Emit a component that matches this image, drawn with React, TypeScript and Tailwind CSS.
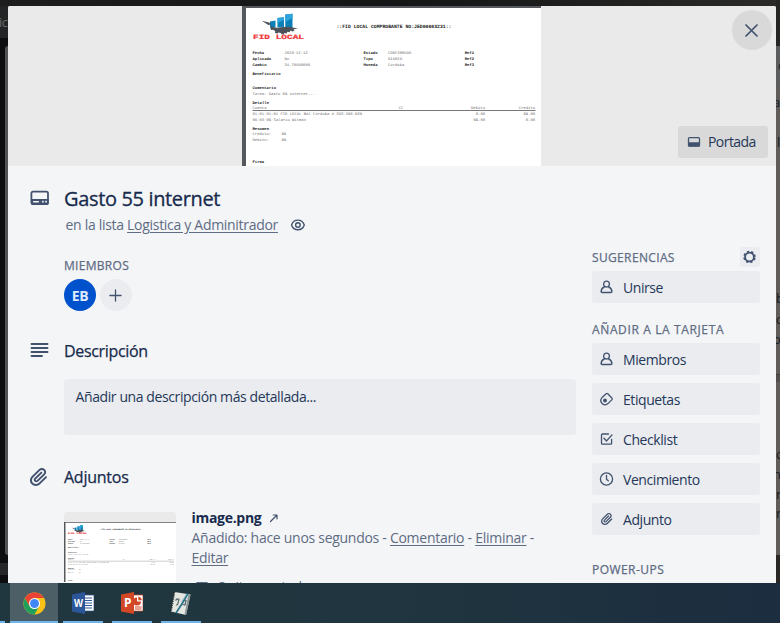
import React from 'react';

type IconProps = { className?: string };

const stroke = {
  fill: 'none',
  stroke: 'currentColor',
  strokeLinecap: 'round' as const,
  strokeLinejoin: 'round' as const,
};

function CoverIcon({ className }: IconProps) {
  return (
    <svg viewBox="0 0 14 12" className={className}>
      <rect x="1.5" y="1.7" width="11" height="8.5" rx="1" {...stroke} strokeWidth="1.3" />
      <rect x="1.5" y="6.3" width="11" height="4.3" rx="0.6" fill="currentColor" />
    </svg>
  );
}

function CardIcon() {
  return (
    <svg viewBox="0 0 20 16" width="20" height="16" className="text-[#42526e]">
      <rect x="1.4" y="1.6" width="16.6" height="12.4" rx="1.6" {...stroke} strokeWidth="1.8" />
      <rect x="1" y="9" width="17.5" height="5.8" rx="1.2" fill="currentColor" />
      <rect x="3" y="11" width="6" height="1.4" rx="0.6" fill="#f4f5f7" />
      <rect x="12" y="10.8" width="1.8" height="1.7" rx="0.6" fill="#f4f5f7" />
      <rect x="15.1" y="10.8" width="1.8" height="1.7" rx="0.6" fill="#f4f5f7" />
    </svg>
  );
}

function PersonIcon() {
  return (
    <svg viewBox="0 0 16 16" width="16" height="16">
      <circle cx="7.5" cy="5.1" r="2.9" {...stroke} strokeWidth="1.3" />
      <path d="M5.3 8C3.3 8.7 2.2 10.3 2.1 12.6c0 .6.3.9.9.9h9c.6 0 .9-.3.9-.9C12.8 10.3 11.7 8.7 9.7 8" {...stroke} strokeWidth="1.4" />
    </svg>
  );
}

function TagIcon() {
  return (
    <svg viewBox="0 0 16 16" width="16" height="16">
      <path d="M3 6.6 7.2 2.7q.8-.6 1.6 0L13 7.3q.5.7 0 1.3L9 12.6A4.25 4.25 0 0 1 3 6.6z" {...stroke} strokeWidth="1.3" />
      <circle cx="6" cy="9.5" r="1.9" fill="currentColor" />
    </svg>
  );
}

function CheckIcon() {
  return (
    <svg viewBox="0 0 16 16" width="16" height="16">
      <path d="M9.5 3H3.5c-.6 0-1 .3-1 .9V12.300c0 .6.4.9 1 .9h8.200c.6 0 .9-.3.9-.9V8.500" {...stroke} strokeWidth="1.3" />
      <path d="m5 7.300 2.600 2.600 5.400-6" {...stroke} strokeWidth="1.4" />
    </svg>
  );
}

function ClockIcon() {
  return (
    <svg viewBox="0 0 16 16" width="16" height="16">
      <circle cx="7.5" cy="8" r="6.1" {...stroke} strokeWidth="1.3" />
      <path d="M7.5 4.300V8.300l1.800 1.500" {...stroke} strokeWidth="1.3" />
    </svg>
  );
}

function ClipIcon({ className }: IconProps) {
  return (
    <svg viewBox="0 0 24 24" className={className}>
      <path
        fill="currentColor"
        fillRule="evenodd"
        d="M11.6426 17.9647C10.1123 19.46 7.62736 19.4606 6.10092 17.9691C4.57505 16.478 4.57769 14.0467 6.10253 12.5566L13.2505 5.57184C14.1476 4.6952 15.5861 4.69251 16.4832 5.56921C17.3763 6.44184 17.3778 7.85135 16.4869 8.72199L9.78361 15.2722C9.53288 15.5172 9.12807 15.5163 8.86954 15.2636C8.61073 15.0107 8.60963 14.6158 8.86954 14.3618L15.0989 8.27463C15.4812 7.90109 15.4812 7.29546 15.0989 6.92192C14.7167 6.54838 14.0969 6.54838 13.7146 6.92192L7.48523 13.0091C6.45911 14.0118 6.46356 15.618 7.48523 16.6163C8.50674 17.6145 10.1511 17.6186 11.1679 16.6249L17.8712 10.0747C19.5274 8.45632 19.5244 5.83555 17.8676 4.2165C16.2047 2.59156 13.5266 2.59657 11.8662 4.21913L4.71822 11.2039C2.42951 13.4404 2.42555 17.083 4.71661 19.3218C7.00774 21.5606 10.7323 21.5597 13.0269 19.3174L19.7133 12.7837C20.0956 12.4101 20.0956 11.8045 19.7133 11.431C19.331 11.0574 18.7113 11.0574 18.329 11.431L11.6426 17.9647Z"
      />
    </svg>
  );
}

function GearIcon() {
  return (
    <svg viewBox="0 0 14 14" width="14" height="14">
      <circle cx="6.5" cy="7" r="4.4" {...stroke} strokeWidth="1.8" />
      <circle cx="6.5" cy="7" r="5.5" fill="none" stroke="currentColor" strokeWidth="1.5" strokeDasharray="2.3 2.02" strokeDashoffset="-1" />
    </svg>
  );
}

function EyeIcon() {
  return (
    <svg viewBox="0 0 16 14" width="16" height="14">
      <path d="M1.5 7C2.7 3.8 5 2.100 7.900 2.100S13.100 3.800 14.300 7c-1.200 3.200-3.500 4.800-6.400 4.800S2.700 10.200 1.500 7z" {...stroke} strokeWidth="1.4" />
      <circle cx="7.9" cy="7" r="2.3" {...stroke} strokeWidth="1.4" />
    </svg>
  );
}

type Line = [number, number, string, number, string];

const lines: Line[] = [
  [10.5, 47.5, 'Fecha', 11.7, 'b'],
  [42.5, 47.5, '2020-12-13', 23, 'n'],
  [10.5, 53.5, 'Aplicado', 18.7, 'b'],
  [42.5, 53.5, 'No', 4.6, 'n'],
  [10.5, 59.5, 'Cambio', 14, 'b'],
  [42.5, 59.5, '34.79040000', 25.6, 'n'],
  [10.5, 69, 'Beneficiario', 28, 'b'],
  [10.5, 83, 'Comentario', 23.5, 'b'],
  [10.5, 88.5, 'Tarea: Gasto 55 internet...', 62.5, 'n'],
  [10.5, 97.5, 'Detalle', 16.5, 'b'],
  [10.5, 102.7, 'Cuenta', 14, 'n'],
  [10.5, 109.2, '01-01-01-01 FID LOCAL BAC Córdoba # 363-390-535', 109.5, 'n'],
  [10.5, 115.2, '06-03-05 Salario Witman', 53.5, 'n'],
  [10.5, 124.3, 'Resumen', 16.5, 'b'],
  [10.5, 129.3, 'Credito:', 18.7, 'n'],
  [39.5, 129.3, '55', 4.7, 'n'],
  [10.5, 135.3, 'Debito:', 16.5, 'n'],
  [39.5, 135.3, '55', 4.7, 'n'],
  [10.5, 156.6, 'Firma', 11.7, 'b'],
  [121.5, 47.5, 'Estado', 14, 'b'],
  [146, 47.5, 'CONFIRMADO', 23, 'n'],
  [121.5, 53.5, 'Tipo', 9.4, 'b'],
  [146, 53.5, 'DIARIO', 14, 'n'],
  [121.5, 59.5, 'Moneda', 14, 'b'],
  [146, 59.5, 'Cordoba', 16.4, 'n'],
  [222.7, 47.5, 'Ref1', 9.4, 'b'],
  [222.7, 53.5, 'Ref2', 9.4, 'b'],
  [222.7, 59.5, 'Ref3', 9.4, 'b'],
  [156.7, 102.7, 'CC', 4.7, 'n'],
  [229, 102.7, 'Debito', 14, 'n'],
  [276.7, 102.7, 'Credito', 16.4, 'n'],
  [233.7, 109.2, '0.00', 9.4, 'n'],
  [281.5, 109.2, '55.00', 11.7, 'n'],
  [231.4, 115.2, '55.00', 11.7, 'n'],
  [283.8, 115.2, '0.00', 9.4, 'n'],
];

function Receipt({ className }: IconProps) {
  return (
    <svg viewBox="0 0 299 160" className={className} fontFamily="'Liberation Mono', monospace" textRendering="geometricPrecision">
      <rect width="299" height="160" fill="#fff" />
      <path d="M0 0H299V2H4V160H0z" fill="#55585c" />
      <g fill="#0a7fb8">
        <path d="M28 15.5 33.5 14.500v7H28z" />
        <path d="M35.5 12 42 11.200V21.500h-6.500z" />
        <path d="M43.3 8.500 50.500 7.800V22h-7.200z" />
      </g>
      <path d="M35.5 12 42 11.200V14l-6.500 3zM43.300 8.500 50.500 7.800V12l-7.200 4z" fill="#2ba5dc" />
      <g fill="#4d5258">
        <path d="M19.7 14.700 29 17l-2 1.200c2 2.500 6 4 10 3.500 6-.7 10-1.500 13.500-.2l5.500 1-4.500.8 1 1.500-2 .8-1.800-1-1.200 1.700-2-.5-1 1.700-2.200-.5-.4 1.500-2.400-.2-.6-1.400-2.600-.4-1 1.200-2.300-1 .2-1.500-2-1.500-2 .2-1-2 1.200-1.300-1-2.300-2 .6z" />
      </g>
      <text x="11" y="33" fontSize="6.4" fontWeight="700" fill="#f03438" stroke="#f03438" strokeWidth="0.2" textLength="51" lengthAdjust="spacingAndGlyphs">FID LOCAL</text>
      <text x="94.5" y="22" fontSize="4.9" fontWeight="700" fill="#202020" textLength="115" lengthAdjust="spacingAndGlyphs">::FID LOCAL COMPROBANTE NO:JED00003231::</text>
      {lines.map(([x, y, value, width, kind], i) => (
        <text
          key={i}
          x={x}
          y={y}
          fontSize="3.9"
          fontWeight={kind === 'b' ? 700 : 400}
          fill={kind === 'b' ? '#181818' : '#6d6d6d'}
          textLength={width}
          lengthAdjust="spacingAndGlyphs"
        >
          {value}
        </text>
      ))}
      <path d="M10.5 104.5H293.5" stroke="#777" strokeWidth="1" />
    </svg>
  );
}

function SideButton({ icon, label }: { icon: React.ReactNode; label: string }) {
  return (
    <button className="flex h-8 w-full items-center rounded-[3px] bg-[#eaecf0] pl-2 text-[14px] text-[#253858]">
      <span className="-ml-px w-4 text-[#42526e]">{icon}</span>
      <span className="ml-2 tracking-[-0.42px]">{label}</span>
    </button>
  );
}

function ChromeIcon() {
  return (
    <svg viewBox="0 0 48 48" width="23" height="23">
      <circle cx="24" cy="24" r="23" fill="#fbc116" />
      <path d="M4.1 12.5 14 29.7l10 5.8L24 47A23 23 0 0 1 4.1 12.5z" fill="#1fa15d" />
      <path d="M24 47 34 29.7 24 34 14 29.7z" fill="#1fa15d" />
      <path d="M4.1 12.5A23 23 0 0 1 43.9 12.5H24L14 29.7z" fill="#ea4335" />
      <circle cx="24" cy="24" r="11.5" fill="#fff" />
      <circle cx="24" cy="24" r="9.3" fill="#4285f4" />
    </svg>
  );
}

function WordIcon() {
  return (
    <svg viewBox="0 0 22 22" width="22" height="22" fontFamily="'Open Sans', sans-serif">
      <rect x="11" y="3" width="11" height="16" fill="#fff" stroke="#2b579a" strokeWidth="0.7" />
      <path d="M13 6h7M13 8.500h7M13 11h7M13 13.500h7M13 16h7" stroke="#2b579a" strokeWidth="1.2" />
      <path d="M0 2.500 13 0v22L0 19.500z" fill="#2b579a" />
      <text x="2" y="15" fontSize="10.5" fontWeight="700" fill="#fff" textLength="9" lengthAdjust="spacingAndGlyphs">W</text>
    </svg>
  );
}

function PowerPointIcon() {
  return (
    <svg viewBox="0 0 22 22" width="22" height="22" fontFamily="'Open Sans', sans-serif">
      <rect x="11" y="3" width="11" height="16" fill="#fff" stroke="#d24726" strokeWidth="0.7" />
      <path d="M16 5.500v4h4a4 4 0 1 1-4-4z" fill="#d24726" />
      <path d="M17.3 4.500a4 4 0 0 1 3.500 3.700h-3.500z" fill="#d24726" />
      <path d="M14 15h6.500M14 17h6.500" stroke="#d24726" strokeWidth="1" />
      <path d="M0 2.500 13 0v22L0 19.500z" fill="#d24726" />
      <text x="3" y="15.3" fontSize="12" fontWeight="700" fill="#fff">P</text>
    </svg>
  );
}

function NotebookIcon() {
  return (
    <svg viewBox="0 0 22 25" width="22" height="25">
      <path d="M4.5 1 20.500 3.500 16 24 1 20.500z" fill="#e4e6e2" />
      <path d="m20.5 3.500-4.500 20.500-1.500-.5L18.500 3.200z" fill="#8a9596" />
      <path d="M4.5 1 1 20.500" stroke="#222a2c" strokeWidth="1.6" strokeDasharray="1.2 1" />
      <path d="M5.5 9.500 7 8l2 .3-1.500 5.500L6 14M13.500 9l2.500.5-1 4.500-2.500-.5" stroke="#566265" strokeWidth="1.2" fill="none" />
      <path d="M18 2.500 12.500 12 6 22" stroke="#2a7189" strokeWidth="1.7" fill="none" />
      <path d="M16.5 3 11.500 11" stroke="#91bec9" strokeWidth="1" />
    </svg>
  );
}

function Task({ children, active }: { children: React.ReactNode; active?: boolean }) {
  return (
    <div className={`flex h-full items-center justify-center border-b-2 border-[#70b5ea] pt-[2px] ${active ? 'w-12 bg-[#4c5f67]' : 'w-10'}`}>
      {children}
    </div>
  );
}

function BoardBehind() {
  return (
    <div className="absolute inset-0 overflow-hidden bg-[#0c0e10]">
      <div className="absolute inset-x-0 top-0 h-[6px] bg-linear-to-r from-[#1d1d1e] via-[#141516] to-[#2b2a28]" />
      <div className="absolute top-[6px] left-0 h-8 w-2 overflow-hidden bg-[#242526] text-[13px] text-[#66696c]">
        <span className="absolute top-[7px] -left-[1px] tracking-[-0.5px]">ic</span>
      </div>
      <div className="absolute top-[46px] left-[5px] h-[509px] w-[10px] rounded-[3px] bg-[#545454]" />
      <div className="absolute top-[563px] left-0 h-3 w-2 bg-[#262728]" />
      <div className="absolute top-0 right-0 h-[46px] w-1 bg-[#252524]" />
      <div className="absolute top-[46px] right-0 h-[509px] w-1 bg-[#5f5c5a]" />
      <div className="absolute top-[46px] right-0 h-10 w-1 bg-[#5b5c5d]" />
      <div className="absolute top-[374px] right-0 h-2 w-1 border-t border-[#3f3e40] bg-[#514f4e]" />
      <div className="absolute top-[555px] right-0 h-7 w-1 bg-[#282725]" />
      <div className="absolute top-0 right-0 h-full w-1 overflow-hidden text-[13px] leading-4 text-[#161c26]">
        <span className="absolute top-[57px] left-[2px]">c</span>
        <span className="absolute top-[94px] -left-[3px]">a</span>
        <span className="absolute top-[134px] left-[1px]">l</span>
        <span className="absolute top-[290px] left-0">b</span>
        <span className="absolute top-[311px] left-0">c</span>
        <span className="absolute top-[331px] -left-[3px]">o</span>
        <span className="absolute top-[446px] left-0">c</span>
        <span className="absolute top-[466px] -left-[3px]">n</span>
        <span className="absolute top-[486px] left-0">n</span>
        <span className="absolute top-[505px] left-0">r</span>
      </div>
    </div>
  );
}

export default function App() {
  return (
    <div className="relative flex h-[623px] w-[780px] flex-col overflow-hidden font-['Open_Sans','Noto_Sans',sans-serif] text-[#172b4d]">
      <BoardBehind />

      <div className="relative mt-[6px] ml-2 h-[577px] w-[768px] overflow-hidden rounded-t-[2px] bg-[#f4f5f7]">
        <header className="relative flex h-[160px] justify-center bg-[#eaeaea]">
          <Receipt className="mr-[1px] h-[160px] w-[299px]" />
          <button className="absolute top-1 right-1 flex size-10 items-center justify-center rounded-full bg-[#d9d9d9] pr-px text-[#42526e]">
            <svg viewBox="0 0 13 13" width="13" height="13">
              <path d="m1 1 11 11M12 1 1 12" {...stroke} strokeWidth="1.7" />
            </svg>
          </button>
          <button className="absolute right-2 bottom-2 flex h-8 w-[90px] items-center rounded-[3px] bg-[#d9d9d9] pl-[9px] text-[14px] text-[#253858]">
            <CoverIcon className="h-3 w-[14px] text-[#42526e]" />
            <span className="ml-[7px] pb-px tracking-[-0.55px]">Portada</span>
          </button>
        </header>

        <div className="flex">
          <main className="w-[568px] shrink-0 pl-[22px]">
            <div className="flex h-[50px] items-start pt-[21px]">
              <div className="w-[34px] pt-[3px]"><CardIcon /></div>
              <h1 className="text-[20px] leading-6 font-medium tracking-[-0.35px] [-webkit-text-stroke:0.3px_#172b4d]">Gasto 55 internet</h1>
            </div>
            <div className="-mt-px ml-[35.5px] flex h-5 items-center text-[14px] text-[#5e6c84]">
              <span className="pb-px tracking-[-0.3px] whitespace-nowrap">en la lista <u className="underline-offset-2">Logistica y Adminitrador</u></span>
              <span className="ml-[12.5px] text-[#42526e]"><EyeIcon /></span>
            </div>
            <h3 className="mt-[21px] ml-[34px] h-5 text-[12px] leading-5 font-medium tracking-[0.3px] text-[#5e6c84] [-webkit-text-stroke:0.25px_#5e6c84]">MIEMBROS</h3>
            <div className="mt-[3px] ml-[34px] flex gap-1">
              <div className="flex size-8 items-center justify-center rounded-full bg-[#0052cc] text-[14px] font-bold tracking-[-0.3px] text-[#deebff]">EB</div>
              <button className="flex size-8 items-center justify-center rounded-full bg-[#eaecf0] pr-px text-[#42526e]">
                <svg viewBox="0 0 14 14" width="13" height="13"><path d="M7 1v12M1 7h12" {...stroke} strokeWidth="1.4" /></svg>
              </button>
            </div>

            <div className="mt-[28px] flex h-6 items-center">
              <div className="w-[34px] pb-[2px] text-[#42526e]">
                <svg viewBox="0 0 20 16" width="20" height="16"><path d="M1.5 2h16M1.500 6h16M1.500 10h16M1.500 14h10.500" {...stroke} strokeWidth="1.9" /></svg>
              </div>
              <h2 className="text-[16px] leading-6 font-medium tracking-[-0.33px] [-webkit-text-stroke:0.25px_#172b4d]">Descripción</h2>
            </div>
            <div className="mt-4 ml-[34px] h-14 w-[512px] rounded-[3px] bg-[#eaecf0] px-[11.5px] pt-2 text-[14px] leading-5 text-[#253858]">
              <span className="tracking-[-0.4px]">Añadir una descripción más detallada...</span>
            </div>

            <div className="mt-[30px] flex h-6 items-center">
              <div className="w-[34px] text-[#42526e]"><ClipIcon className="-ml-[3px] size-6" /></div>
              <h2 className="text-[16px] leading-6 font-medium tracking-[-0.25px] [-webkit-text-stroke:0.25px_#172b4d]">Adjuntos</h2>
            </div>
            <div className="mt-[23px] ml-[34px] flex">
              <div className="h-20 w-28 shrink-0 overflow-hidden rounded-[3px] bg-[#eaeaea] pt-[10px]">
                <Receipt className="h-[60px] w-28" />
                <div className="h-5 bg-white" />
              </div>
              <div className="-mt-1 ml-[15.5px] text-[14px] leading-5 text-[#5e6c84]">
                <div className="flex items-center font-bold text-[#172b4d]">
                  <span className="tracking-[-0.3px]">image.png</span>
                  <svg viewBox="0 0 10 10" width="10" height="10" className="ml-2 text-[#42526e]">
                    <path d="M1.5 8.500 7.500 2.500M4.200 2H8V5.800" {...stroke} strokeWidth="1.2" />
                  </svg>
                </div>
                <p className="tracking-[-0.28px] whitespace-nowrap">Añadido: hace unos segundos - <u className="underline-offset-2">Comentario</u> - <u className="underline-offset-2">Eliminar</u> -</p>
                <p className="tracking-[-0.3px]"><u className="underline-offset-2">Editar</u></p>
                <div className="mt-[9px] flex items-center pl-[3px]">
                  <CoverIcon className="h-3 w-[14px]" />
                  <span className="ml-2 tracking-[-0.3px]">Quitar portada</span>
                </div>
              </div>
            </div>
          </main>

          <aside className="ml-4 w-[168px] pt-[81px] text-[12px] font-medium text-[#5e6c84]">
            <div className="flex h-5 items-center justify-between">
              <h3 className="pt-[2px] tracking-[0.35px] [-webkit-text-stroke:0.25px_#5e6c84]">SUGERENCIAS</h3>
              <button className="flex size-5 items-center justify-center rounded-[3px] bg-[#eaecf0] text-[#42526e]"><GearIcon /></button>
            </div>
            <div className="mt-1 font-normal">
              <SideButton icon={<PersonIcon />} label="Unirse" />
            </div>
            <h3 className="mt-[17px] h-[19px] leading-5 tracking-[0.63px] whitespace-nowrap [-webkit-text-stroke:0.25px_#5e6c84]">AÑADIR A LA TARJETA</h3>
            <div className="mt-1 flex flex-col gap-2 font-normal">
              <SideButton icon={<PersonIcon />} label="Miembros" />
              <SideButton icon={<TagIcon />} label="Etiquetas" />
              <SideButton icon={<CheckIcon />} label="Checklist" />
              <SideButton icon={<ClockIcon />} label="Vencimiento" />
              <SideButton icon={<ClipIcon className="size-4" />} label="Adjunto" />
            </div>
            <h3 className="mt-[25px] h-5 leading-5 tracking-[0.45px] [-webkit-text-stroke:0.25px_#5e6c84]">POWER-UPS</h3>
          </aside>
        </div>
      </div>

      <footer className="relative flex h-10 bg-linear-to-r from-[#21373f] via-[#20353f] to-[#1c2d3f]">
        <div className="mr-[5px] h-full w-[5px] border-b-2 border-[#70b5ea]" />
        <Task active><ChromeIcon /></Task>
        <div className="ml-[5px] flex gap-[9px]">
          <Task><WordIcon /></Task>
          <Task><PowerPointIcon /></Task>
          <Task><NotebookIcon /></Task>
        </div>
      </footer>
    </div>
  );
}
